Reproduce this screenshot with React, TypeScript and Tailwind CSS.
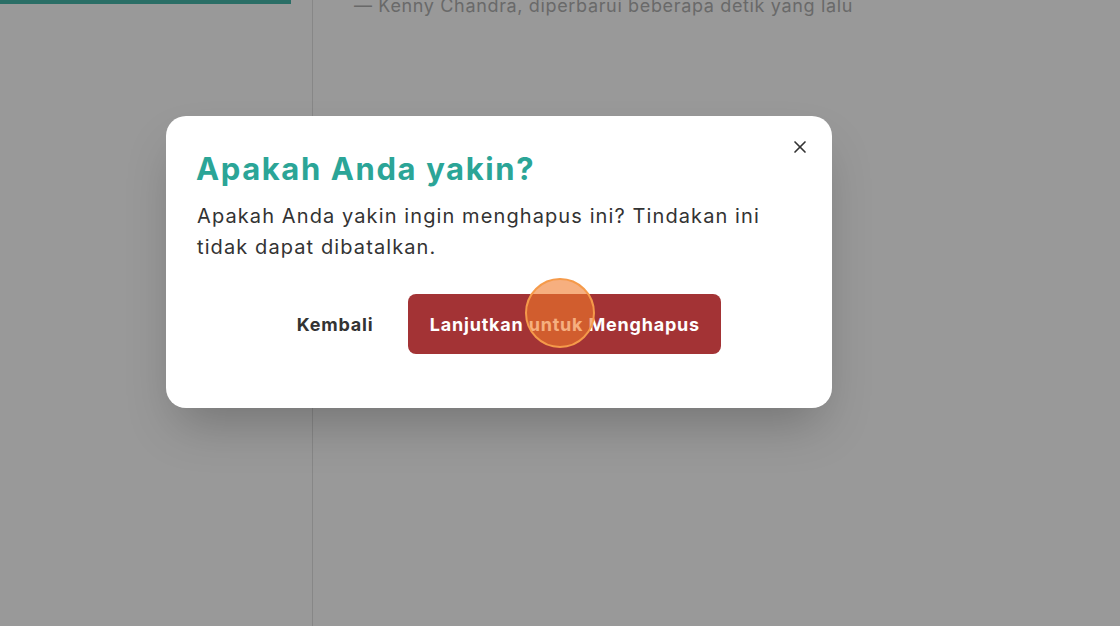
import React from 'react'
import { X } from 'lucide-react'

export default function App() {
    return (
        <div className="relative w-[1120px] h-[626px] overflow-hidden bg-white" style={{ fontFamily: 'Inter, "Noto Sans", sans-serif' }}>
            {/* Page behind */}
            <div className="flex h-full">
                <aside className="w-[313px] h-full border-r border-[#e2e2e2] shrink-0">
                    <div className="w-[291px] h-[4px] bg-[#46b8aa]" />
                </aside>
                <main className="pl-[41px] -mt-[6px]">
                    <p className="text-[18px] leading-[24px] tracking-[0.65px] text-[#b0b0b0]">— Kenny Chandra, diperbarui beberapa detik yang lalu</p>
                </main>
            </div>

            {/* Overlay */}
            <div className="absolute inset-0 bg-black/40 flex items-start pt-[116px] pl-[166px]">
                <div className="relative w-[666px] h-[292px] bg-white rounded-[20px] shadow-2xl pl-[30px] pr-[20px] pt-[31px]">
                    <button className="absolute top-[19px] right-[20px] w-[24px] h-[24px] flex items-center justify-center text-[#333]">
                        <X className="w-[20px] h-[20px]" strokeWidth={2} />
                    </button>
                    <h2 className="text-[31px] leading-[44px] font-bold text-[#2ba597] tracking-[1.6px]">Apakah Anda yakin?</h2>
                    <p className="mt-[10px] pl-px text-[20px] leading-[31px] text-[#333] tracking-[1.1px]">
                        Apakah Anda yakin ingin menghapus ini? Tindakan ini tidak dapat dibatalkan.
                    </p>
                    <div className="mt-[31px] flex items-center justify-center gap-[19px] -mr-[20px] -ml-[30px] pl-[4px]">
                        <button className="px-[16px] h-[60px] text-[18px] font-bold text-[#333] tracking-[0.8px]">Kembali</button>
                        <button className="w-[313px] h-[60px] rounded-[8px] bg-[#a33335] text-white text-[18px] font-bold tracking-[0.8px]">
                            Lanjutkan untuk Menghapus
                        </button>
                    </div>
                </div>
            </div>

            {/* Click indicator */}
            <div className="absolute left-[525px] top-[278px] w-[70px] h-[70px] rounded-full border-2 border-[#f59a4a] bg-[#f07a2a]/60" />
        </div>
    )
}
